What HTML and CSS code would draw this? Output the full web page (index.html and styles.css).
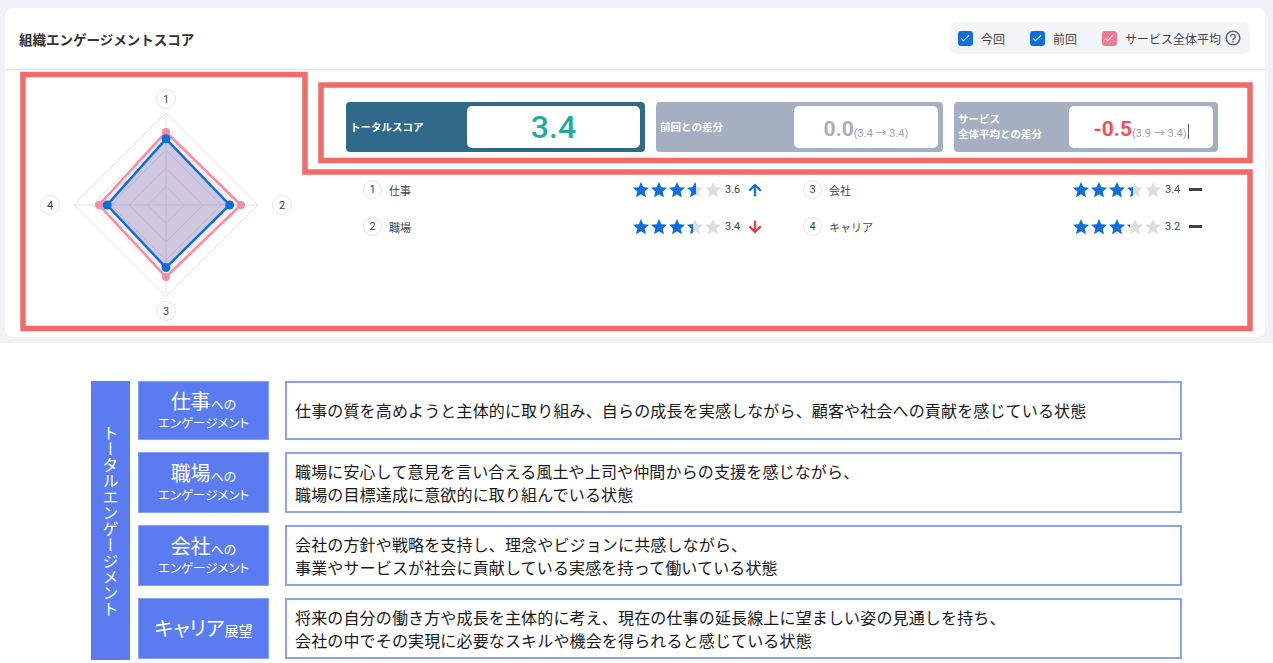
FILE: index.html
```html
<!DOCTYPE html>
<html lang="ja">
<head>
  <meta charset="UTF-8">
  <title>組織エンゲージメントスコア</title>
  <link rel="stylesheet" href="styles.css">
</head>
<body>
  <div class="top">
    <section class="card">
      <header class="card-head">
        <h2>組織エンゲージメントスコア</h2>
        <div class="legend">
          <span class="check blue"><svg viewBox="0 0 24 24"><path d="M9 16.2 4.8 12l-1.4 1.4L9 19 21 7l-1.4-1.4z"/></svg></span>
          <span class="legend-text">今回</span>
          <span class="check blue"><svg viewBox="0 0 24 24"><path d="M9 16.2 4.8 12l-1.4 1.4L9 19 21 7l-1.4-1.4z"/></svg></span>
          <span class="legend-text">前回</span>
          <span class="check pink"><svg viewBox="0 0 24 24"><path d="M9 16.2 4.8 12l-1.4 1.4L9 19 21 7l-1.4-1.4z"/></svg></span>
          <span class="legend-text">サービス全体平均</span>
          <svg class="help" viewBox="0 0 24 24"><path d="M11 18h2v-2h-2v2zm1-16C6.48 2 2 6.48 2 12s4.48 10 10 10 10-4.48 10-10S17.52 2 12 2zm0 18c-4.41 0-8-3.59-8-8s3.59-8 8-8 8 3.59 8 8-3.59 8-8 8zm0-14c-2.21 0-4 1.79-4 4h2c0-1.1.9-2 2-2s2 .9 2 2c0 2-3 1.75-3 5h2c0-2.25 3-2.5 3-5 0-2.21-1.79-4-4-4z"/></svg>
        </div>
      </header>

      <div class="card-body">
        <div class="radar">
          <svg width="300" height="267" viewBox="0 0 300 267">
            <g class="grid">
              <polygon points="161,43 253,135 161,227 69,135"/>
              <polygon points="161,61.4 234.6,135 161,208.6 87.4,135"/>
              <polygon points="161,79.8 216.2,135 161,190.2 105.8,135"/>
              <polygon points="161,98.2 197.8,135 161,171.8 124.2,135"/>
              <polygon points="161,116.6 179.4,135 161,153.4 142.6,135"/>
              <line x1="161" y1="43" x2="161" y2="227"/>
              <line x1="69" y1="135" x2="253" y2="135"/>
            </g>
            <polygon class="avg" points="161,62 236,135 161,207 94,135"/>
            <circle class="avg-dot" cx="161" cy="62" r="4"/>
            <circle class="avg-dot" cx="236" cy="135" r="4"/>
            <circle class="avg-dot" cx="161" cy="207" r="4"/>
            <circle class="avg-dot" cx="94" cy="135" r="4"/>
            <polygon class="now" points="161,68.8 224.6,135 161,197.6 102.1,135"/>
            <circle class="now-dot" cx="161" cy="68.8" r="4.5"/>
            <circle class="now-dot" cx="224.6" cy="135" r="4.5"/>
            <circle class="now-dot" cx="161" cy="197.6" r="4.5"/>
            <circle class="now-dot" cx="102.1" cy="135" r="4.5"/>
            <g class="axis">
              <circle cx="161" cy="29" r="9.5"/><text x="161" y="33">1</text>
              <circle cx="277" cy="135" r="9.5"/><text x="277" y="139">2</text>
              <circle cx="161" cy="241" r="9.5"/><text x="161" y="245">3</text>
              <circle cx="45" cy="135" r="9.5"/><text x="45" y="139">4</text>
            </g>
          </svg>
        </div>

        <div class="summary">
          <div class="scores">
            <div class="score total">
              <div class="score-label">トータルスコア</div>
              <div class="score-value"><span class="big teal">3.4</span></div>
            </div>
            <div class="score diff">
              <div class="score-label">前回との差分</div>
              <div class="score-value"><span class="mid gray">0.0</span><span class="range">(3.4 → 3.4)</span></div>
            </div>
            <div class="score avg-diff">
              <div class="score-label">サービス<br>全体平均との差分</div>
              <div class="score-value"><span class="mid red">-0.5</span><span class="range">(3.9 → 3.4)</span><span class="caret"></span></div>
            </div>
          </div>

          <div class="ratings">
            <div class="rating">
              <span class="num">1</span><span class="name">仕事</span>
              <span class="stars"><span class="stars-row gray-row"></span><span class="stars-fill" style="width: 63px"><span class="stars-row blue-row"></span></span></span>
              <span class="val">3.6</span>
              <svg class="trend up" viewBox="0 0 24 24"><path d="M4 12l1.41 1.41L11 7.83V20h2V7.83l5.58 5.59L20 12l-8-8-8 8z"/></svg>
            </div>
            <div class="rating">
              <span class="num">3</span><span class="name">会社</span>
              <span class="stars"><span class="stars-row gray-row"></span><span class="stars-fill" style="width: 60px"><span class="stars-row blue-row"></span></span></span>
              <span class="val">3.4</span>
              <span class="trend flat"></span>
            </div>
            <div class="rating">
              <span class="num">2</span><span class="name">職場</span>
              <span class="stars"><span class="stars-row gray-row"></span><span class="stars-fill" style="width: 60px"><span class="stars-row blue-row"></span></span></span>
              <span class="val">3.4</span>
              <svg class="trend down" viewBox="0 0 24 24"><path d="M20 12l-1.41-1.41L13 16.17V4h-2v12.17l-5.58-5.59L4 12l8 8 8-8z"/></svg>
            </div>
            <div class="rating">
              <span class="num">4</span><span class="name">キャリア</span>
              <span class="stars"><span class="stars-row gray-row"></span><span class="stars-fill" style="width: 57px"><span class="stars-row blue-row"></span></span></span>
              <span class="val">3.2</span>
              <span class="trend flat"></span>
            </div>
          </div>
        </div>
      </div>
    </section>

    <svg class="marks" width="1273" height="343" viewBox="0 0 1273 343">
      <path d="M23 74.5 H305 V172 H1250 V328.5 H23 Z"/>
      <rect x="321" y="85" width="929" height="75.5"/>
    </svg>
  </div>

  <div class="guide">
    <div class="total-bar"><span>トータルエンゲージメント</span></div>
    <div class="rows">
      <div class="lab"><div><span class="l-big">仕事</span><span class="l-small">への</span></div><div class="l-sub">エンゲージメント</div></div>
      <div class="desc">仕事の質を高めようと主体的に取り組み、自らの成長を実感しながら、顧客や社会への貢献を感じている状態</div>

      <div class="lab"><div><span class="l-big">職場</span><span class="l-small">への</span></div><div class="l-sub">エンゲージメント</div></div>
      <div class="desc">職場に安心して意見を言い合える風土や上司や仲間からの支援を感じながら、<br>職場の目標達成に意欲的に取り組んでいる状態</div>

      <div class="lab"><div><span class="l-big">会社</span><span class="l-small">への</span></div><div class="l-sub">エンゲージメント</div></div>
      <div class="desc">会社の方針や戦略を支持し、理念やビジョンに共感しながら、<br>事業やサービスが社会に貢献している実感を持って働いている状態</div>

      <div class="lab"><div><span class="l-big">キャリア</span><span class="l-small2">展望</span></div></div>
      <div class="desc">将来の自分の働き方や成長を主体的に考え、現在の仕事の延長線上に望ましい姿の見通しを持ち、<br>会社の中でその実現に必要なスキルや機会を得られると感じている状態</div>
    </div>
  </div>

  <script>
    // build the five stars for each rating row
    const star = '<svg viewBox="2 2 20 20"><path d="M12 17.27L18.18 21l-1.64-7.03L22 9.24l-7.19-.61L12 2 9.19 8.63 2 9.24l5.46 4.73L5.82 21z"/></svg>';
    document.querySelectorAll('.stars-row').forEach(row => {
      row.innerHTML = star.repeat(5);
    });
  </script>
</body>
</html>
```

FILE: styles.css
```css
* { box-sizing: border-box; }
body { margin: 0; font-family: Roboto, "Noto Sans CJK JP", sans-serif; color: #333; background: #fff; }

.top { position: relative; height: 343px; background: #f1f2f7; padding: 8px 8px 6px 5px; }
.card { height: 329px; background: #fff; border-radius: 8px; }
.card-head {
  height: 62px;
  display: flex;
  align-items: center;
  justify-content: space-between;
  padding: 0 15px 0 14px;
  border-bottom: 1px solid #e3e4e8;
}
.card-head h2 { margin: 0; font-size: 13.5px; font-weight: 700; color: #333; }

.legend {
  display: flex;
  align-items: center;
  height: 32px;
  margin-top: -1px;
  padding: 0 8px 0 8px;
  background: #f4f5f9;
  border-radius: 7px;
}
.check { width: 15px; height: 15px; border-radius: 3px; display: flex; align-items: center; justify-content: center; }
.check svg { width: 12px; height: 12px; fill: #fff; }
.check.blue { background: #0b6fe0; }
.check.pink { background: #f27a94; }
.legend-text { font-size: 12px; color: #444; margin: 0 25px 0 8px; }
.legend-text:last-of-type { margin-right: 3px; }
.help { width: 18px; height: 18px; fill: #666; }

.card-body { display: flex; height: 267px; }
.radar { width: 300px; }
.radar svg { display: block; }
.grid polygon, .grid line { fill: none; stroke: #e3e3e6; stroke-width: 1; }
.avg { fill: rgba(250, 150, 170, 0.16); stroke: #f78da2; stroke-width: 2.5; }
.avg-dot { fill: #f78da2; }
.now { fill: rgba(70, 85, 175, 0.25); stroke: #0b6fe0; stroke-width: 2.5; }
.now-dot { fill: #0b6fe0; }
.axis circle { fill: #fff; stroke: #e4e4e6; stroke-width: 1; }
.axis text { font-size: 11px; fill: #444; text-anchor: middle; font-family: Roboto, sans-serif; }

.summary { flex: 1; padding: 32px 0 0 41px; }
.scores { display: flex; gap: 11px; }
.score { display: flex; height: 50px; padding: 4px 5px 4px 4px; border-radius: 4px; }
.score.total { width: 299px; background: #30698a; }
.score.diff { width: 287px; background: #a5afc2; }
.score.avg-diff { width: 264px; background: #a5afc2; }
.score-label {
  flex: 1;
  display: flex;
  align-items: center;
  font-size: 10.5px;
  font-weight: 700;
  line-height: 15px;
  color: #fff;
}
.score-value {
  display: flex;
  align-items: baseline;
  justify-content: center;
  padding-top: 3px;
  background: #fff;
  border-radius: 5px;
}
.total .score-value { width: 173px; padding-top: 0; align-items: center; }
.diff .score-value, .avg-diff .score-value { width: 144px; align-items: center; }
.big { font-size: 32px; font-weight: 500; }
.mid { font-size: 21px; font-weight: 700; }
.teal { color: #1fae9a; }
.gray { color: #a5afc2; }
.red { color: #f25058; }
.range { font-size: 11px; color: #9aa1ad; margin-top: 6px; }
.caret { width: 1px; height: 15px; background: #555; margin: 5px 0 0 1px; }

.ratings {
  display: grid;
  grid-template-columns: 440px 440px;
  row-gap: 18px;
  margin: 28px 0 0 17px;
}
.rating { display: flex; align-items: center; height: 19px; font-size: 11px; color: #444; }
.num {
  width: 19px;
  height: 19px;
  border: 1px solid #e4e4e6;
  border-radius: 50%;
  display: flex;
  align-items: center;
  justify-content: center;
  font-size: 11px;
}
.name { width: 244px; margin-left: 7px; }
.stars { position: relative; width: 88px; height: 16px; }
.stars-row { display: flex; gap: 2px; width: 88px; }
.stars-row svg { width: 16px; height: 16px; }
.gray-row svg { fill: #dedede; }
.blue-row svg { fill: #0b6fe0; }
.stars-fill { position: absolute; top: 0; left: 0; overflow: hidden; height: 16px; }
.val { margin-left: 4px; width: 20px; }
.trend { width: 18px; height: 18px; margin-left: 1px; stroke-width: 1.2px; }
.trend.up { fill: #0b6fe0; stroke: #0b6fe0; }
.trend.down { fill: #e53a3a; stroke: #e53a3a; }
.trend.flat { height: 2.5px; width: 13px; margin-left: 4px; background: #444; }

.marks { position: absolute; top: 0; left: 0; pointer-events: none; }
.marks path, .marks rect { fill: none; stroke: #f26b6b; stroke-width: 5.5; }

.guide {
  display: flex;
  gap: 8px;
  height: 320px;
  padding: 38px 0 0 91px;
  font-family: "Noto Sans CJK JP", sans-serif;
}
.total-bar {
  width: 39px;
  height: 279px;
  background: #5b7cf1;
  color: #fff;
  display: flex;
  align-items: center;
  justify-content: center;
  font-size: 16px;
}
.total-bar span { writing-mode: vertical-rl; }
.rows {
  display: grid;
  grid-template-columns: 131px 897px;
  grid-template-rows: 59px 61px 61px 61px;
  column-gap: 16px;
  row-gap: 12px;
}
.lab {
  background: #5b7cf1;
  border: 1px solid #86a0f5;
  color: #fff;
  display: flex;
  flex-direction: column;
  align-items: center;
  justify-content: center;
  font-feature-settings: "palt";
  line-height: 21px;
}
.l-big { font-size: 20px; }
.l-small { font-size: 13px; }
.l-small2 { font-size: 14px; }
.l-sub { font-size: 12.5px; line-height: 17px; }
.desc {
  display: flex;
  align-items: center;
  padding-left: 8px;
  border: 2px solid #89a2f4;
  font-size: 16px;
  line-height: 23px;
  letter-spacing: 0.15px;
  color: #1a1a1a;
}
```
